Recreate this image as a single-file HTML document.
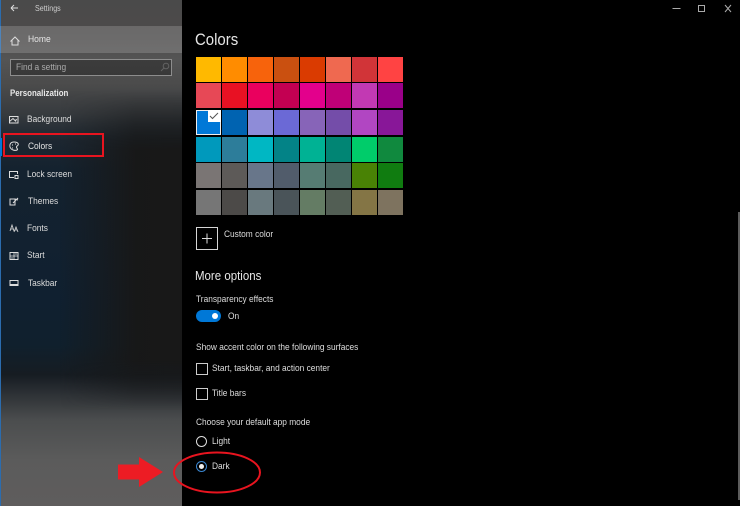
<!DOCTYPE html>
<html><head><meta charset="utf-8"><style>
html,body{margin:0;padding:0;background:#000}
#r{position:relative;width:740px;height:506px;overflow:hidden;background:#000;font-family:"Liberation Sans",sans-serif;color:#ddd}
#s{position:absolute;left:0;top:0;width:182px;height:506px;background:linear-gradient(180deg,#4a4a4a 0,#4c4a4a 25px,#545454 60px,#4b4b4b 85px,#363a3e 115px,#1d2731 140px,#14222f 170px,#102030 300px,#10202d 345px,#161c22 375px,#2e3236 395px,#4b4d4e 420px,#5b5b5b 460px,#5f5d5d 506px)}
#sr{position:absolute;left:60px;top:90px;width:122px;height:320px;background:linear-gradient(90deg,rgba(24,24,24,0),rgba(24,24,24,.5) 40px,rgba(24,24,24,.97) 75px,#181818);-webkit-mask-image:linear-gradient(180deg,transparent,#000 60px,#000 270px,transparent);mask-image:linear-gradient(180deg,transparent,#000 60px,#000 270px,transparent)}
#bl{position:absolute;left:0;top:0;width:1px;height:506px;background:#2b6cae}
#hm{position:absolute;left:0;top:26px;width:182px;height:27px;background:rgba(255,255,255,.17)}
.t{position:absolute;white-space:nowrap;font-size:9.4px;line-height:12px;filter:blur(.25px);transform:scaleX(.89);transform-origin:0 50%}
.sw{position:absolute;width:25px;height:25px}
svg{position:absolute;overflow:visible}
.ic{filter:blur(.25px)}
.ck{position:absolute;left:196px;width:10px;height:10px;border:1px solid #ccc}
</style></head><body><div id="r">
<div id="s"></div><div id="sr"></div><div id="bl"></div><div id="hm"></div>
<div style="position:absolute;left:0;top:138px;width:2px;height:18px;background:#0078d7"></div>

<svg class="ic" style="left:0;top:0" width="182" height="300" fill="none" stroke="#ddd" stroke-width="1">
<path d="M11 8H18M11 8L14 5M11 8L14 11"/>
<path d="M10.500 41.500L15 37L19.500 41.500M12 40V45H18V40"/>
<circle cx="166" cy="66" r="2.800" stroke="#999"/><path d="M164 68L161 71" stroke="#999"/>
<rect x="9.500" y="116.500" width="8.500" height="6.500"/><path d="M9.500 121.500L13 118.500L16 121.500M15 120.500L17 119.500"/>
<path d="M14 142C10 142 9.500 145 10 147C11 150 15 151 17 150C19 149 15 148 17 146C19 145 19 142 14 142Z"/><path d="M12 145H13M12 148H13M15 144H16"/>
<path d="M17.500 174V171.500H9.500V177.500H14"/><rect x="15" y="175.500" width="3" height="3"/>
<path d="M10 199H15V205H10ZM13 203L18 198M15 199L18 200"/>
<path d="M10 231L12 225L14 231M14 232L16 227L18 232M11 229H13M15 230H17" stroke-width=".8"/>
<rect x="10" y="252.500" width="8" height="7"/><path d="M10 256H18M14 252.500V259.500M11 258H13M15 254H17" stroke-width=".8"/>
<rect x="10" y="280.500" width="8" height="5"/><path d="M10 284.500H18"/>
</svg>

<div class="t" style="left:35px;top:3px;font-size:8px;color:#ccc">Settings</div>
<div class="t" style="left:28px;top:34px;color:#e6e6e6;font-size:9.600px">Home</div>
<div style="position:absolute;left:10px;top:59px;width:160px;height:15px;border:1px solid #8d8d8d;background:rgba(30,30,30,.45)"></div>
<div class="t" style="left:16px;top:61px;color:#aaa">Find a setting</div>
<div class="t" style="left:10px;top:87px;font-weight:bold;font-size:8.900px;color:#e8e8e8">Personalization</div>
<div class="t" style="left:27px;top:113px;color:#ddd">Background</div>
<div class="t" style="left:28px;top:140px;color:#e6e6e6">Colors</div>
<div class="t" style="left:27px;top:168px">Lock screen</div>
<div class="t" style="left:28px;top:195px">Themes</div>
<div class="t" style="left:27px;top:222px">Fonts</div>
<div class="t" style="left:27px;top:249px">Start</div>
<div class="t" style="left:28px;top:277px">Taskbar</div>
<div style="position:absolute;left:3px;top:133px;width:97px;height:20px;border:2px solid #e8141f"></div>

<svg class="ic" style="left:660px;top:0" width="80" height="20" fill="none" stroke="#aaa" stroke-width="1">
<path d="M12.500 8.500H20.500"/><rect x="38.500" y="5.500" width="6" height="6"/><path d="M65 5L71 12M71 5L65 12"/>
</svg>
<div style="position:absolute;left:738px;top:212px;width:2px;height:288px;background:#5c5c5c"></div>

<div class="t" style="left:195px;top:31px;font-size:16.800px;line-height:18px;color:#e6e6e6">Colors</div>

<div class="sw" style="left:196px;top:57px;background:#ffb900"></div>
<div class="sw" style="left:222px;top:57px;background:#ff8c00"></div>
<div class="sw" style="left:248px;top:57px;background:#f7630c"></div>
<div class="sw" style="left:274px;top:57px;background:#ca5010"></div>
<div class="sw" style="left:300px;top:57px;background:#da3b01"></div>
<div class="sw" style="left:326px;top:57px;background:#ef6950"></div>
<div class="sw" style="left:352px;top:57px;background:#d13438"></div>
<div class="sw" style="left:378px;top:57px;background:#ff4343"></div>
<div class="sw" style="left:196px;top:83px;background:#e74856"></div>
<div class="sw" style="left:222px;top:83px;background:#e81123"></div>
<div class="sw" style="left:248px;top:83px;background:#ea005e"></div>
<div class="sw" style="left:274px;top:83px;background:#c30052"></div>
<div class="sw" style="left:300px;top:83px;background:#e3008c"></div>
<div class="sw" style="left:326px;top:83px;background:#bf0077"></div>
<div class="sw" style="left:352px;top:83px;background:#c239b3"></div>
<div class="sw" style="left:378px;top:83px;background:#9a0089"></div>
<div class="sw" style="left:196px;top:110px;background:#0078d7;box-shadow:inset 0 0 0 1px #eee"></div>
<div style="position:absolute;left:208px;top:110px;width:13px;height:12px;background:#fff"></div>
<svg style="left:208px;top:110px" width="13" height="12" fill="none" stroke="#555" stroke-width="1"><path d="M2 6L4.500 8.500L10 3"/></svg>
<div class="sw" style="left:222px;top:110px;background:#0063b1"></div>
<div class="sw" style="left:248px;top:110px;background:#8e8cd8"></div>
<div class="sw" style="left:274px;top:110px;background:#6b69d6"></div>
<div class="sw" style="left:300px;top:110px;background:#8764b8"></div>
<div class="sw" style="left:326px;top:110px;background:#744da9"></div>
<div class="sw" style="left:352px;top:110px;background:#b146c2"></div>
<div class="sw" style="left:378px;top:110px;background:#881798"></div>
<div class="sw" style="left:196px;top:137px;background:#0099bc"></div>
<div class="sw" style="left:222px;top:137px;background:#2d7d9a"></div>
<div class="sw" style="left:248px;top:137px;background:#00b7c3"></div>
<div class="sw" style="left:274px;top:137px;background:#038387"></div>
<div class="sw" style="left:300px;top:137px;background:#00b294"></div>
<div class="sw" style="left:326px;top:137px;background:#018574"></div>
<div class="sw" style="left:352px;top:137px;background:#00cc6a"></div>
<div class="sw" style="left:378px;top:137px;background:#10893e"></div>
<div class="sw" style="left:196px;top:163px;background:#7a7574"></div>
<div class="sw" style="left:222px;top:163px;background:#5d5a58"></div>
<div class="sw" style="left:248px;top:163px;background:#68768a"></div>
<div class="sw" style="left:274px;top:163px;background:#515c6b"></div>
<div class="sw" style="left:300px;top:163px;background:#567c73"></div>
<div class="sw" style="left:326px;top:163px;background:#486860"></div>
<div class="sw" style="left:352px;top:163px;background:#498205"></div>
<div class="sw" style="left:378px;top:163px;background:#107c10"></div>
<div class="sw" style="left:196px;top:190px;background:#767676"></div>
<div class="sw" style="left:222px;top:190px;background:#4c4a48"></div>
<div class="sw" style="left:248px;top:190px;background:#69797e"></div>
<div class="sw" style="left:274px;top:190px;background:#4a5459"></div>
<div class="sw" style="left:300px;top:190px;background:#647c64"></div>
<div class="sw" style="left:326px;top:190px;background:#525e54"></div>
<div class="sw" style="left:352px;top:190px;background:#847545"></div>
<div class="sw" style="left:378px;top:190px;background:#7e735f"></div>

<div style="position:absolute;left:196px;top:227px;width:20px;height:21px;border:1px solid #d5d5d5"></div>
<svg style="left:196px;top:227px" width="22" height="23" fill="none" stroke="#ddd" stroke-width="1"><path d="M11 6.500V16.500M6 11.500H16"/></svg>
<div class="t" style="left:224px;top:228px">Custom color</div>

<div class="t" style="left:195px;top:268px;font-size:12.900px;line-height:15px;color:#e6e6e6">More options</div>
<div class="t" style="left:196px;top:293px">Transparency effects</div>
<div style="position:absolute;left:196px;top:310px;width:25px;height:12px;border-radius:6px;background:#0078d7"></div>
<div style="position:absolute;left:212px;top:313px;width:6px;height:6px;border-radius:50%;background:#fff"></div>
<div class="t" style="left:228px;top:310px">On</div>

<div class="t" style="left:196px;top:341px">Show accent color on the following surfaces</div>
<div class="ck" style="top:363px"></div>
<div class="t" style="left:212px;top:362px">Start, taskbar, and action center</div>
<div class="ck" style="top:388px"></div>
<div class="t" style="left:212px;top:387px">Title bars</div>

<div class="t" style="left:196px;top:416px">Choose your default app mode</div>
<div style="position:absolute;left:196px;top:436px;width:9px;height:9px;border:1px solid #ddd;border-radius:50%"></div>
<div class="t" style="left:212px;top:435px">Light</div>
<div style="position:absolute;left:196px;top:461px;width:9px;height:9px;border:1px solid #3a86d0;border-radius:50%"></div>
<div style="position:absolute;left:199px;top:464px;width:5px;height:5px;background:#eee;border-radius:50%"></div>
<div class="t" style="left:212px;top:460px">Dark</div>

<svg style="left:0;top:0" width="740" height="506" fill="none">
<ellipse cx="217" cy="472.500" rx="43" ry="20" stroke="#e8141f" stroke-width="2"/>
<path d="M118 464.500H139V457L163 472L139 487V479.500H118Z" fill="#ed1c24"/>
</svg>
</div></body></html>
